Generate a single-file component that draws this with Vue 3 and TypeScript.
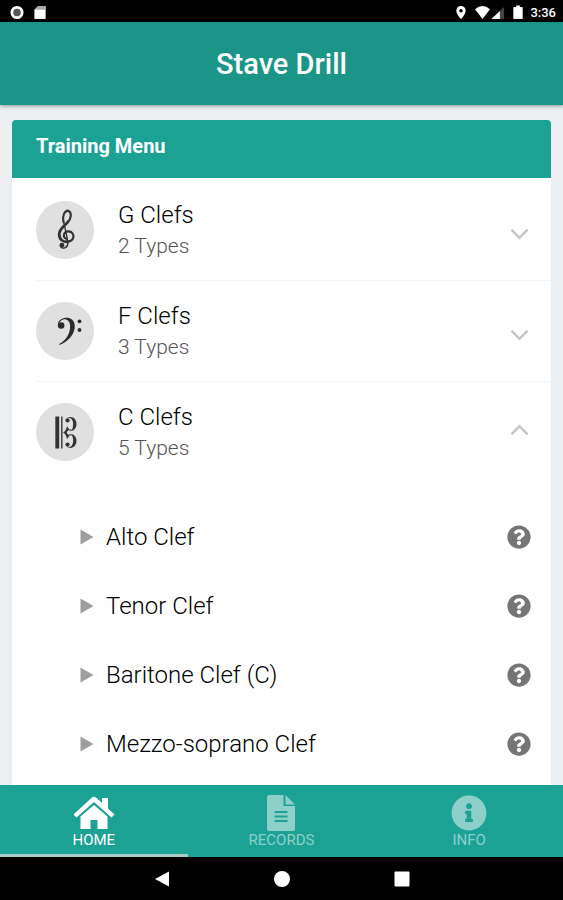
<script setup lang="ts">
import { ref } from 'vue'

interface ClefGroup {
  id: string
  name: string
  types: number
}

const groups: ClefGroup[] = [
  { id: 'g', name: 'G Clefs', types: 2 },
  { id: 'f', name: 'F Clefs', types: 3 },
  { id: 'c', name: 'C Clefs', types: 5 },
]

const cClefs: string[] = ['Alto Clef', 'Tenor Clef', 'Baritone Clef (C)', 'Mezzo-soprano Clef']

const tabs = [
  { id: 'home', label: 'HOME' },
  { id: 'records', label: 'RECORDS' },
  { id: 'info', label: 'INFO' },
]

const openGroup = ref<string>('c')
const activeTab = ref<string>('home')

function toggle(id: string): void {
  openGroup.value = openGroup.value === id ? '' : id
}
</script>

<template>
  <div class="screen">
    <div class="status">
      <svg class="status-icon" viewBox="0 0 16 16" aria-hidden="true">
        <circle cx="8" cy="8" r="5.5" fill="#555" stroke="#fff" stroke-width="3" />
      </svg>
      <svg class="status-icon" viewBox="0 0 16 16" aria-hidden="true">
        <path d="M6 1h7q1 0 1 1v12q0 1-1 1H3q-1 0-1-1V5z" fill="#fff" />
        <path d="M6 1h7q1 0 1 1v3H3z" fill="#aaa" />
      </svg>
      <span class="spacer"></span>
      <svg class="pin" viewBox="2 0 12 16" aria-hidden="true">
        <path d="M8 1a5 5 0 0 0-5 5c0 3.600 5 9 5 9s5-5.400 5-9a5 5 0 0 0-5-5zm0 3.200a1.900 1.900 0 1 1 0 3.800 1.900 1.900 0 0 1 0-3.800z" fill="#fff" fill-rule="evenodd" />
      </svg>
      <svg class="signal" viewBox="0 0 32 16" aria-hidden="true">
        <path d="M0 4.500Q8-2.500 16 4.500L8 15z" fill="#fff" />
        <path d="M31 2v13H17.500z" fill="#444" />
        <path d="M26.500 6.300V15h-9z" fill="#fff" />
      </svg>
      <svg class="battery" viewBox="0 0 10 16" aria-hidden="true">
        <path d="M3 0.500h4V2h2q1 0 1 1v11q0 1-1 1H1q-1 0-1-1V3q0-1 1-1h2z" fill="#fff" />
      </svg>
      <span>3:36</span>
    </div>

    <header class="bar">
      <h1>Stave Drill</h1>
    </header>

    <main class="content">
      <section class="card">
        <h2>Training Menu</h2>
        <div class="groups">
          <div v-for="group in groups" :key="group.id" class="group">
            <button
              class="group-row"
              type="button"
              :aria-expanded="openGroup === group.id"
              @click="toggle(group.id)"
            >
              <span class="avatar">
                <svg v-if="group.id === 'g'" class="clef" viewBox="0 0 60 60" aria-hidden="true">
                  <g fill="none" stroke="#333" stroke-linecap="round" stroke-linejoin="round">
                    <path d="M28.500 22C27 15 29.500 10 33.500 10C37 11.500 37 18 32.500 22.500" stroke-width="2.200" />
                    <path d="M33 21.500C29 26.500 24 28.500 24 34.500C24 40 28 42.800 33 42" stroke-width="2.900" />
                    <path d="M33 42C38.500 41 40 37 37.800 33.500C35.500 30.500 30.500 30.800 29.200 34C28.400 36.400 29.600 38.300 31.200 39" stroke-width="2.200" />
                    <path d="M28.500 21C29.500 26 32.500 38 33 43.500C33.200 48.500 28 49.800 25.600 47.600" stroke-width="1.400" />
                  </g>
                  <circle cx="26.800" cy="45.800" r="2.500" fill="#333" />
                </svg>
                <svg v-else-if="group.id === 'f'" class="clef" viewBox="0 0 60 60" aria-hidden="true">
                  <path d="M22.500 23C23.500 15.500 37 13.500 39.500 21.500C42.500 31.500 33.500 41 24.500 44.500L24 43.500C31.500 39 35.500 32.500 35.300 24.500C35 17 27.500 16 24.800 20.500Z" fill="#2b2b2b" />
                  <circle cx="26" cy="24.300" r="3.400" fill="#2b2b2b" />
                  <circle cx="45" cy="20" r="2" fill="#2b2b2b" />
                  <circle cx="45" cy="29" r="2" fill="#2b2b2b" />
                </svg>
                <svg v-else class="clef" viewBox="0 0 60 60" aria-hidden="true">
                  <path d="M20 14h4v33h-4zM26 14h1.400v33H26z" fill="#333" />
                  <path
                    d="M28 30.500C31 29 31.500 26 32.200 23.500C33.500 27.500 37 29.500 38 25.500C39 21 38.500 16 34 15.200L31.500 16.500C32.800 14 38 13.500 40.500 17C43.500 21.500 41.500 28.500 36.500 28.700C35 28.700 34 28.200 33.300 28.200L31.700 30.500L33.300 32.800C34 32.800 35 32.300 36.500 32.300C41.500 32.500 43.500 39.500 40.500 44C38 47.500 32.800 47 31.500 44.500L34 45.800C38.500 45 39 40 38 35.500C37 31.500 33.500 33.500 32.200 37.500C31.500 35 31 32 28 30.500Z"
                    fill="#333"
                  />
                  <circle cx="32.600" cy="18" r="2.200" fill="#333" />
                  <circle cx="32.600" cy="43" r="2.200" fill="#333" />
                </svg>
              </span>
              <span class="labels">
                <span class="name">{{ group.name }}</span>
                <span class="types">{{ group.types }} Types</span>
              </span>
              <svg class="chevron" :class="{ up: openGroup === group.id }" viewBox="0 0 20 12" aria-hidden="true">
                <path d="M1.500 1.500L10 10l8.500-8.500" fill="none" stroke="#c4c4c4" stroke-width="2.600" />
              </svg>
            </button>
            <ul v-if="group.id === 'c' && openGroup === 'c'" class="clefs">
              <li v-for="clef in cClefs" :key="clef">
                <button class="start" type="button">
                  <svg class="play" viewBox="0 0 14 16" aria-hidden="true">
                    <path d="M0.500 0.500L13.500 8L0.500 15.500z" fill="#9e9e9e" />
                  </svg>
                  {{ clef }}
                </button>
                <button class="help" type="button" :aria-label="`About ${clef}`">
                  <svg viewBox="0 0 512 512" aria-hidden="true">
                    <path
                      d="M504 256c0 136.997-111.043 248-248 248S8 392.997 8 256C8 119.083 119.043 8 256 8s248 111.083 248 248zM262.655 90c-54.497 0-89.255 22.957-116.549 63.758-3.536 5.286-2.353 12.415 2.715 16.258l34.699 26.310c5.205 3.947 12.621 3.008 16.665-2.122 17.864-22.658 30.113-35.797 57.303-35.797 20.429 0 45.698 13.148 45.698 32.958 0 14.976-12.363 22.667-32.534 33.976C247.128 238.528 216 254.941 216 296v4c0 6.627 5.373 12 12 12h56c6.627 0 12-5.373 12-12v-1.333c0-28.462 83.186-29.647 83.186-106.667 0-58.002-60.165-102-116.531-102zM256 338c-25.365 0-46 20.635-46 46 0 25.364 20.635 46 46 46s46-20.636 46-46c0-25.365-20.635-46-46-46z"
                      fill="#757575"
                    />
                  </svg>
                </button>
              </li>
            </ul>
          </div>
        </div>
      </section>
    </main>

    <nav class="tabs">
      <button
        v-for="tab in tabs"
        :key="tab.id"
        type="button"
        class="tab"
        :class="{ active: activeTab === tab.id }"
        @click="activeTab = tab.id"
      >
        <svg v-if="tab.id === 'home'" viewBox="0 0 42 36" aria-hidden="true">
          <path d="M19 2.500Q21 1 23 2.500L29 8V3h6v10.500L41.500 19.500L38.500 22.500L21 7L3.500 22.500L0.500 19.500z" fill="currentColor" />
          <path d="M21 10L34.500 21.500V34H24.500V25h-7v9H7.500V21.500z" fill="currentColor" />
        </svg>
        <svg v-else-if="tab.id === 'records'" viewBox="0 0 42 36" aria-hidden="true">
          <path
            d="M9 0H23.500V11H35V34q0 2-2 2H9q-2 0-2-2V2q0-2 2-2zM14.500 16v2h13v-2zM14.500 20.500v2h13v-2zM14.500 25v2h13v-2z"
            fill="currentColor"
            fill-rule="evenodd"
          />
          <path d="M25.500 0L35 9.500H25.500z" fill="currentColor" />
        </svg>
        <svg v-else viewBox="0 0 512 512" aria-hidden="true">
          <path
            d="M256 8C119.043 8 8 119.083 8 256c0 136.997 111.043 248 248 248s248-111.003 248-248C504 119.083 392.957 8 256 8zm0 110c23.196 0 42 18.804 42 42s-18.804 42-42 42-42-18.804-42-42 18.804-42 42-42zm56 254c0 6.627-5.373 12-12 12h-88c-6.627 0-12-5.373-12-12v-24c0-6.627 5.373-12 12-12h12v-64h-12c-6.627 0-12-5.373-12-12v-24c0-6.627 5.373-12 12-12h64c6.627 0 12 5.373 12 12v100h12c6.627 0 12 5.373 12 12v24z"
            fill="currentColor"
          />
        </svg>
        <span>{{ tab.label }}</span>
      </button>
    </nav>

    <div class="system">
      <button type="button" aria-label="Back">
        <svg viewBox="0 0 16 16" aria-hidden="true"><path d="M15 0.500v15L1 8z" fill="#fff" /></svg>
      </button>
      <button type="button" aria-label="Home">
        <svg viewBox="0 0 16 16" aria-hidden="true"><circle cx="8" cy="8" r="8" fill="#fff" /></svg>
      </button>
      <button type="button" aria-label="Overview">
        <svg viewBox="0 0 16 16" aria-hidden="true"><rect x="0.500" y="0.500" width="15" height="15" rx="1" fill="#fff" /></svg>
      </button>
    </div>
  </div>
</template>

<style>
body {
  background: #eceff1;
}
</style>

<style scoped>
.screen {
  display: flex;
  flex-direction: column;
  height: 100vh;
  font-family: Roboto, "Liberation Sans", sans-serif;
  color: #212121;
}

button {
  padding: 0;
  border: 0;
  background: none;
  color: inherit;
  font: inherit;
  cursor: pointer;
}

svg {
  display: block;
}

.status {
  display: flex;
  flex: none;
  align-items: center;
  gap: 7px;
  height: 22px;
  padding: 2px 7px 0 9px;
  box-sizing: border-box;
  background: #000;
  color: #fff;
  font-size: 13px;
  font-weight: 500;
}

.status-icon {
  width: 16px;
  height: 15px;
}

.pin {
  width: 12px;
  height: 15px;
}

.signal {
  width: 32px;
  height: 15px;
}

.battery {
  width: 10px;
  height: 15px;
}

.spacer {
  flex: 1;
}

.bar {
  display: flex;
  flex: none;
  align-items: center;
  justify-content: center;
  height: 83px;
  background: #1a9588;
  box-shadow: 0 1px 4px rgba(0, 0, 0, 0.4);
  color: #fff;
}

h1 {
  margin: 0;
  font-size: 29px;
  font-weight: 500;
}

.content {
  display: flex;
  flex: 1;
  flex-direction: column;
  min-height: 0;
  padding: 15px 12px 0;
  overflow: hidden;
}

.card {
  flex: 1;
  border-radius: 4px 4px 0 0;
  background: #fff;
}

h2 {
  margin: 0;
  padding: 14px 24px 20px;
  border-radius: 4px 4px 0 0;
  background: #1ba295;
  color: #fff;
  font-size: 20px;
  font-weight: 700;
  line-height: 24px;
}

.groups {
  padding: 2px 0 0 24px;
}

.group + .group {
  border-top: 1px solid #f3f4f5;
}

.group-row {
  display: flex;
  align-items: center;
  gap: 24px;
  width: 100%;
  height: 100px;
  padding-right: 22px;
  text-align: left;
}

.avatar {
  flex: none;
  width: 58px;
  height: 58px;
  border-radius: 50%;
  background: #e0e0e0;
}

.clef {
  width: 58px;
  height: 58px;
}

.labels {
  display: flex;
  flex: 1;
  flex-direction: column;
}

.name {
  color: #000;
  font-size: 24px;
  font-weight: 300;
  line-height: 32px;
}

.types {
  color: #555;
  font-size: 21px;
  font-weight: 300;
  line-height: 30px;
}

.chevron {
  width: 19px;
  height: 12px;
  margin-top: 8px;
}

.chevron.up {
  margin: 0 0 4px;
  transform: rotate(180deg);
}

.clefs {
  margin: 0;
  padding: 20px 20px 0 44px;
  list-style: none;
}

.clefs li {
  display: flex;
  align-items: center;
  justify-content: space-between;
  height: 69px;
}

.start {
  display: flex;
  align-items: center;
  gap: 12px;
  color: #000;
  font-size: 24px;
  font-weight: 300;
  line-height: 32px;
}

.play {
  width: 14px;
  height: 16px;
}

.help svg {
  width: 24px;
  height: 24px;
}

.tabs {
  display: grid;
  flex: none;
  grid-template-columns: repeat(3, 1fr);
  height: 72px;
  background: #1ba295;
}

.tab {
  display: flex;
  flex-direction: column;
  align-items: center;
  padding-top: 10px;
  border-bottom: 3px solid transparent;
  color: #8dd0ca;
  font-size: 15px;
  line-height: 18px;
}

.tab.active {
  border-color: #a9c9c5;
  color: #fff;
}

.tab svg {
  width: 42px;
  height: 36px;
}

.system {
  display: flex;
  flex: none;
  align-items: center;
  justify-content: center;
  gap: 104px;
  height: 43px;
  background: #000;
}

.system svg {
  width: 16px;
  height: 16px;
}
</style>
